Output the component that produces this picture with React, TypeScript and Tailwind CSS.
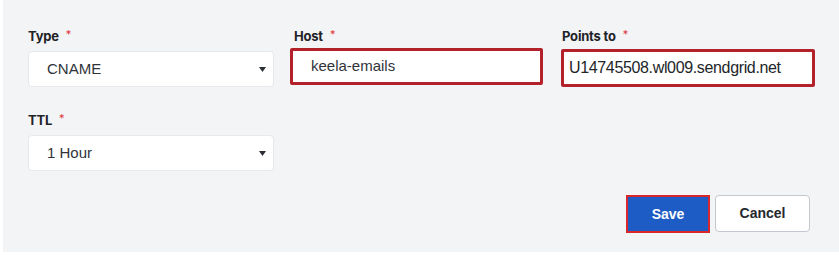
import { ReactNode } from "react";

const SANS = "font-['Liberation_Sans',Arial,sans-serif]";
const LABEL = "font-['Inter',sans-serif]";

function FieldLabel({ children, className = "" }: { children: ReactNode; className?: string }) {
  return (
    <div className={`flex h-4 items-start ${LABEL} ${className}`}>
      <span className="text-[13px] font-bold leading-4 tracking-[-0.2px] text-[#1f2328]">
        {children}
      </span>
      <span className="ml-[7px] text-[11px] leading-3 text-[#e0343a]">*</span>
    </div>
  );
}

function SelectBox({ value }: { value: string }) {
  return (
    <div
      className={`mt-[7px] flex h-9 items-center justify-between rounded-[4px] border border-[#e6e8eb] bg-white pl-[18px] pr-[7px] ${SANS} text-[15px] text-[#30343a]`}
    >
      <span>{value}</span>
      <svg width="7" height="5" viewBox="0 0 7 5" className="mt-[1px]">
        <path d="M0 0 L7 0 L3.5 5 Z" fill="#2b2f33" />
      </svg>
    </div>
  );
}

export default function App() {
  return (
    <div className="min-h-screen bg-white">
      <div className="ml-[3px] h-[252px] bg-[#f3f4f6] pl-[25px] pt-[28px]">
        <div className="flex items-start">
          <div className="w-[246px] shrink-0">
            <FieldLabel>Type</FieldLabel>
            <SelectBox value="CNAME" />
          </div>

          <div className="ml-4 w-[253px] shrink-0">
            <FieldLabel className="pl-1">Host</FieldLabel>
            <div
              className={`mt-1 flex h-[37px] items-center rounded-[2px] border-[3px] border-[#b3222a] bg-white pl-[18px] ${SANS} text-[15px] text-[#30343a]`}
            >
              keela-emails
            </div>
          </div>

          <div className="ml-[18px] w-[254px] shrink-0">
            <FieldLabel className="pl-px">Points to</FieldLabel>
            <div
              className={`mt-[5px] flex h-[38px] items-center rounded-[2px] border-[3px] border-[#b3222a] bg-white pl-[5px] ${SANS} text-[16px] tracking-[-0.35px] text-[#222529]`}
            >
              U14745508.wl009.sendgrid.net
            </div>
          </div>
        </div>

        <div className="mt-[25px] w-[246px]">
          <FieldLabel>TTL</FieldLabel>
          <SelectBox value="1 Hour" />
        </div>

        <div className={`mt-6 flex justify-end gap-[5px] pr-[29px] ${SANS}`}>
          <button
            type="button"
            className="flex h-[38px] w-[84px] items-center justify-center border-2 border-[#d8262d] bg-[#1d5cc5] text-[14px] font-bold text-white"
          >
            Save
          </button>
          <button
            type="button"
            className="flex h-[37px] w-[95px] items-center justify-center rounded-[4px] border border-[#c3c8cf] bg-white text-[14px] font-bold text-[#24282d]"
          >
            Cancel
          </button>
        </div>
      </div>
    </div>
  );
}
